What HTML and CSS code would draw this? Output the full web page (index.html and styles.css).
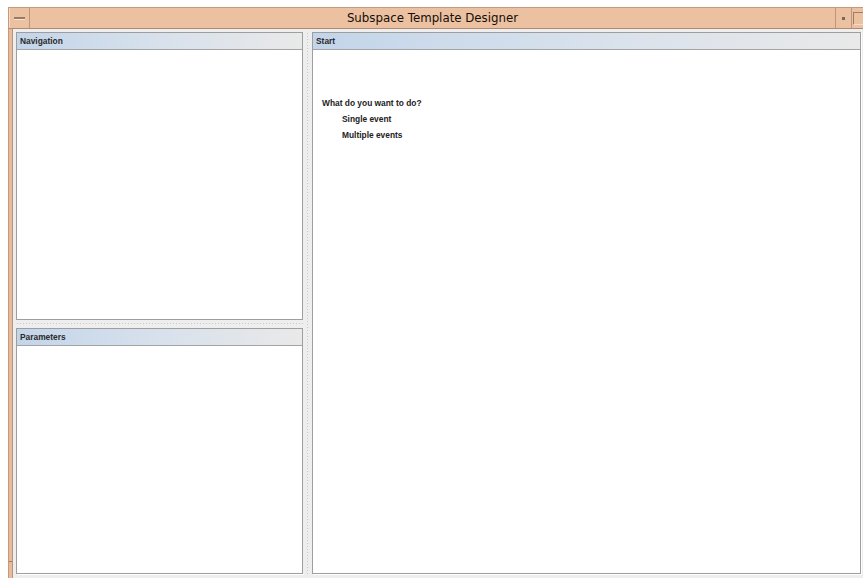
FILE: index.html
```html
<!DOCTYPE html>
<html>
<head>
<meta charset="utf-8">
<title>Subspace Template Designer</title>
<link rel="stylesheet" href="styles.css">
</head>
<body>
<div class="frame">
  <div class="titlebar">
    <div class="tb-btn menu-btn"><span class="dash"></span></div>
    <div class="title">Subspace Template Designer</div>
    <div class="tb-btn min-btn"><span class="dot"></span></div>
    <div class="tb-btn max-btn"><span class="box"></span></div>
  </div>
  <div class="window">
    <div class="edge"><span class="tick"></span></div>
    <div class="content">
      <div class="left-col">
        <section class="panel nav">
          <div class="panel-head">Navigation</div>
          <div class="panel-body"></div>
        </section>
        <div class="hsplit"></div>
        <section class="panel params">
          <div class="panel-head">Parameters</div>
          <div class="panel-body"></div>
        </section>
      </div>
      <div class="vsplit"></div>
      <section class="panel start">
        <div class="panel-head">Start</div>
        <div class="panel-body start-body">
          <p class="question">What do you want to do?</p>
          <p class="option">Single event</p>
          <p class="option">Multiple events</p>
        </div>
      </section>
    </div>
  </div>
</div>
</body>
</html>
```
FILE: styles.css
```css
html, body {
  margin: 0;
  padding: 0;
  background: #ffffff;
  overflow: hidden;
}

.frame {
  margin: 7px 0 0 8px;
  width: 866px;
  height: 571px;
  display: flex;
  flex-direction: column;
}

/* window decoration */
.titlebar {
  height: 22px;
  box-sizing: border-box;
  background: #ecc1a2;
  border-top: 1px solid #c49a7c;
  border-bottom: 1px solid #b08a70;
  border-left: 1px solid #c49a7c;
  display: flex;
  align-items: stretch;
}

.tb-btn {
  box-sizing: border-box;
  border-right: 1px solid #c09678;
  display: flex;
  align-items: center;
  justify-content: center;
}

.menu-btn {
  width: 21px;
  border-left: 1px solid #f6dcc8;
}

.menu-btn .dash {
  width: 11px;
  height: 2px;
  background: #9a7a66;
  border-bottom: 1px solid #f8e4d4;
}

.title {
  flex: 1;
  text-align: center;
  font-family: "DejaVu Sans", sans-serif;
  font-size: 11.8px;
  line-height: 20px;
  color: #140e06;
}

.min-btn {
  width: 17px;
  border-left: 1px solid #c09678;
}

.min-btn .dot {
  width: 3px;
  height: 3px;
  background: #7e6656;
}

.max-btn {
  width: 22px;
  border-right: none;
  justify-content: flex-start;
  padding-left: 1px;
}

.max-btn .box {
  width: 14px;
  height: 13px;
  box-sizing: border-box;
  border: 1px solid #9c7c66;
  border-right-color: #f6dcc8;
  border-bottom-color: #f6dcc8;
}

.window {
  flex: 1;
  display: flex;
}

.edge {
  width: 5px;
  background: #e9bb9b;
  border-left: 1px solid #c49a7c;
  border-right: 1px solid #b8947a;
  box-sizing: border-box;
  position: relative;
}

.edge .tick {
  position: absolute;
  left: 0;
  right: 0;
  top: 532px;
  height: 1px;
  background: #9c7a64;
}

.content {
  flex: 1;
  background: #eeeeee;
  display: flex;
  padding: 3px 0 4px 3px;
  min-height: 0;
}

.left-col {
  width: 287px;
  display: flex;
  flex-direction: column;
}

.panel {
  box-sizing: border-box;
  border: 1px solid #9e9e9e;
  background: #ffffff;
  display: flex;
  flex-direction: column;
  box-shadow: 1px 1px 0 #ffffff;
}

.nav {
  height: 288px;
}

.params {
  flex: 1;
}

.start {
  width: 549px;
}

.panel-head {
  height: 17px;
  box-sizing: border-box;
  border-bottom: 1px solid #a4a4a4;
  background: linear-gradient(to right, #c3d5ea 0%, #d6e0ec 45%, #e9e9e9 100%);
  font-family: "Liberation Sans", Arial, sans-serif;
  font-weight: bold;
  font-size: 8.4px;
  line-height: 16px;
  color: #2a2a2a;
  padding-left: 3px;
}

.panel-body {
  flex: 1;
  background: #ffffff;
}

/* split pane dividers with the dotted grip texture */
.hsplit {
  height: 8px;
  background-color: #eeeeee;
  background-image: radial-gradient(circle, #c8c8c8 0.8px, transparent 1px);
  background-size: 3px 3px;
  background-position: 0 2px;
  background-repeat: repeat-x;
}

.vsplit {
  width: 9px;
  background-color: #eeeeee;
  background-image: radial-gradient(circle, #c6c6c6 0.8px, transparent 1px);
  background-size: 3px 3px;
  background-position: 3px 0;
  background-repeat: repeat-y;
}

.start-body {
  padding: 45px 0 0 9px;
  font-family: "Liberation Sans", Arial, sans-serif;
  font-weight: bold;
  font-size: 8.4px;
  color: #222222;
}

.start-body p {
  margin: 0;
  line-height: 16px;
}

.start-body .option {
  padding-left: 20px;
}
```
